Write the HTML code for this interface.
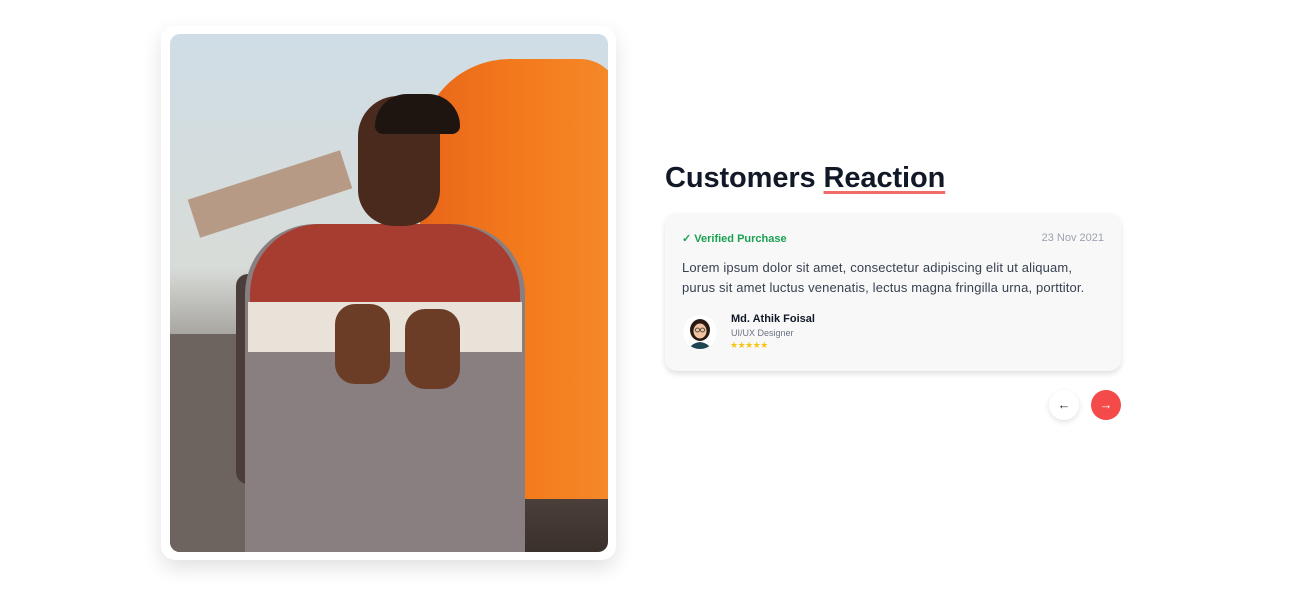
<!DOCTYPE html>
<html><head><meta charset="utf-8"><style>
*{margin:0;padding:0;box-sizing:border-box}
body{width:1291px;height:607px;background:#fff;font-family:"Liberation Sans",sans-serif;position:relative;overflow:hidden}
.frame{position:absolute;left:161px;top:26px;width:455px;height:534px;background:#fff;border-radius:14px;box-shadow:0 8px 20px rgba(0,0,0,.12)}
.photo{position:absolute;left:170px;top:34px;width:438px;height:518px;border-radius:10px;overflow:hidden;background:linear-gradient(180deg,#cfdde6 0%,#d8dcd8 45%,#9a9590 62%,#5a4e48 80%,#3a302c 100%)}
.photo div{position:absolute}
h2{position:absolute;left:665px;top:162px;font-size:29px;font-weight:bold;color:#111827;letter-spacing:-.1px}
h2 span{text-decoration:underline;text-decoration-color:#f26b6b;text-decoration-thickness:3px;text-underline-offset:4px}
.card{position:absolute;left:665px;top:213px;width:456px;height:158px;background:#f8f8f8;border-radius:12px;box-shadow:0 3px 6px rgba(0,0,0,.12)}
.ver{position:absolute;left:17px;top:19px;font-size:11px;font-weight:bold;color:#1aa152}
.date{position:absolute;right:17px;top:19px;font-size:11px;color:#9ca3af}
.txt{position:absolute;left:17px;top:45px;white-space:nowrap;font-size:13px;letter-spacing:.15px;line-height:20px;color:#374151}
.av{position:absolute;left:18px;top:102px;width:34px;height:34px;border-radius:50%;background:#fff;overflow:hidden}
.nm{position:absolute;left:66px;top:100px;font-size:11px;font-weight:bold;color:#111827}
.rl{position:absolute;left:66px;top:115px;font-size:9px;color:#6b7280}
.st{position:absolute;left:65px;top:127px;font-size:9px;color:#f5c518;letter-spacing:-.5px}
.btn{position:absolute;top:390px;width:30px;height:30px;border-radius:50%;text-align:center;line-height:30px;font-size:13px}
</style></head><body>
<div class="frame"></div>
<div class="photo">
 <div style="left:250px;top:25px;width:200px;height:440px;background:linear-gradient(90deg,#e8661a,#f37a1c 50%,#f58a2a);border-radius:90px 40px 0 0"></div>
 <div style="left:20px;top:140px;width:160px;height:40px;background:#b79a86;transform:rotate(-18deg)"></div>
 <div style="left:0;top:300px;width:80px;height:218px;background:#6d6460"></div>
 <div style="left:66px;top:240px;width:28px;height:210px;background:#4a3d3a;border-radius:12px"></div>
 <div style="left:75px;top:190px;width:280px;height:330px;background:#8a7f80;border-radius:70px 70px 0 0"></div>
 <div style="left:80px;top:190px;width:270px;height:80px;background:#a63d30;border-radius:70px 70px 0 0"></div>
 <div style="left:78px;top:268px;width:274px;height:50px;background:#e9e2d8"></div>
 <div style="left:188px;top:62px;width:82px;height:130px;background:#4a2a1c;border-radius:40px 40px 36px 36px"></div>
 <div style="left:205px;top:60px;width:85px;height:40px;background:#1e1410;border-radius:40px 40px 10px 10px"></div>
 <div style="left:165px;top:270px;width:55px;height:80px;background:#6b3c26;border-radius:20px"></div>
 <div style="left:235px;top:275px;width:55px;height:80px;background:#6b3c26;border-radius:20px"></div>
</div>
<h2>Customers <span>Reaction</span></h2>
<div class="card">
 <div class="ver">✓ Verified Purchase</div>
 <div class="date">23 Nov 2021</div>
 <div class="txt">Lorem ipsum dolor sit amet, consectetur adipiscing elit ut aliquam,<br>purus sit amet luctus venenatis, lectus magna fringilla urna, porttitor.</div>
 <div class="av"><svg width="34" height="34"><ellipse cx="17" cy="15" rx="10" ry="11" fill="#2a1a14"/><ellipse cx="17" cy="16" rx="6.5" ry="7.5" fill="#f1c3a0"/><path d="M5 34 Q17 20 29 34Z" fill="#1f4552"/><circle cx="14.5" cy="15" r="2" fill="none" stroke="#333" stroke-width=".8"/><circle cx="19.5" cy="15" r="2" fill="none" stroke="#333" stroke-width=".8"/></svg></div>
 <div class="nm">Md. Athik Foisal</div>
 <div class="rl">UI/UX Designer</div>
 <div class="st">★★★★★</div>
</div>
<div class="btn" style="left:1049px;background:#fff;box-shadow:0 2px 6px rgba(0,0,0,.12);color:#333">←</div>
<div class="btn" style="left:1091px;background:#f44a4a;color:#fff">→</div>
</body></html>
